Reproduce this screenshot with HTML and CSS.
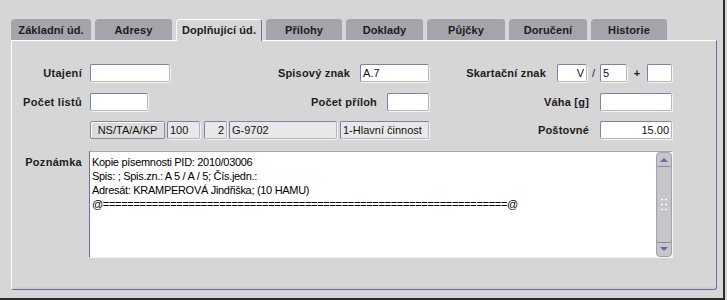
FILE: index.html
```html
<!DOCTYPE html>
<html lang="cs">
<head>
    <meta charset="UTF-8">
    <title>Doplňující údaje</title>
    <link rel="stylesheet" href="styles.css">
</head>
<body>
    <div class="window">

        <!-- Tabs -->
        <div class="tabs">
            <div class="tab w80">Základní úd.</div>
            <div class="tab w77">Adresy</div>
            <div class="tab active w86">Doplňující úd.</div>
            <div class="tab w76">Přílohy</div>
            <div class="tab w77">Doklady</div>
            <div class="tab w78">Půjčky</div>
            <div class="tab w78">Doručení</div>
            <div class="tab w76">Historie</div>
        </div>

        <!-- Tab panel -->
        <div class="panel">
            <div class="row">
                <label class="lbl">Utajení</label>
                <div class="mid">
                    <input class="field" style="width:80px" type="text">
                    <div class="group">
                        <label class="lbl-in">Spisový znak</label>
                        <input class="field" style="width:69px" type="text" value="A.7">
                    </div>
                </div>
                <div class="right">
                    <label class="lbl-in">Skartační znak</label>
                    <input class="field num" style="width:30px" type="text" value="V">
                    <span class="sep s13">/</span>
                    <input class="field" style="width:27px" type="text" value="5">
                    <span class="sep s20">+</span>
                    <input class="field" style="width:25px" type="text">
                </div>
            </div>

            <div class="row gap10">
                <label class="lbl">Počet listů</label>
                <div class="mid">
                    <input class="field" style="width:58px" type="text">
                    <div class="group">
                        <label class="lbl-in">Počet příloh</label>
                        <input class="field" style="width:42px" type="text">
                    </div>
                </div>
                <div class="right">
                    <label class="lbl-in">Váha [g]</label>
                    <input class="field" style="width:72px" type="text">
                </div>
            </div>

            <div class="row gap12">
                <span class="lbl"></span>
                <div class="mid start">
                    <button class="btn">NS/TA/A/KP</button>
                    <input class="field ro ml2" style="width:33px" type="text" value="100" readonly>
                    <input class="field ro num ml4" style="width:23px" type="text" value="2" readonly>
                    <input class="field ro ml2" style="width:108px" type="text" value="G-9702" readonly>
                    <input class="field ro ml3" style="width:89px" type="text" value="1-Hlavní činnost" readonly>
                </div>
                <div class="right">
                    <label class="lbl-in">Poštovné</label>
                    <input class="field num" style="width:72px" type="text" value="15.00">
                </div>
            </div>

            <div class="memo-row">
                <label class="lbl memo-lbl">Poznámka</label>
                <div class="memo">
                    <div class="memo-text">Kopie písemnosti PID: 2010/03006
Spis: ; Spis.zn.: A 5 / A / 5; Čís.jedn.:
Adresát: KRAMPEROVÁ Jindřiška; (10 HAMU)
@==================================================================@</div>
                    <div class="scrollbar">
                        <div class="arrow up"></div>
                        <div class="track">
                            <div class="grip"></div>
                        </div>
                        <div class="arrow down"></div>
                    </div>
                </div>
            </div>
        </div>

    </div>
</body>
</html>
```

FILE: styles.css
```css
/* Basic Styles */
html, body {
    margin: 0;
    padding: 0;
    height: 300px;
    overflow: hidden;
}

body {
    background-color: #d6d6d6;
    font-family: "Liberation Sans", Arial, sans-serif;
    font-size: 11px;
    color: #1c1c1c;
}

.window {
    box-sizing: border-box;
    width: 725px;
    height: 300px;
    padding: 19px 0 0 11px;
    border-right: 2px solid #2c2c2c;
    border-bottom: 2px solid #2c2c2c;
}

/* Tabs */
.tabs {
    display: flex;
    gap: 4px;
    height: 21px;
}

.tab {
    box-sizing: border-box;
    height: 21px;
    padding-top: 3px;
    line-height: 16px;
    text-align: center;
    font-weight: bold;
    letter-spacing: 0.1px;
    background-color: #a4a4aa;
    border-radius: 4px 3px 0 0;
}

.tab.active {
    position: relative;
    z-index: 1;
    height: 22px;
    background-color: #d6d6d6;
    border-top: 1px solid #ffffff;
    border-left: 1px solid #ffffff;
    border-right: 1px solid #6c6ca8;
    padding-top: 2px;
}

.w76 { width: 76px; }
.w77 { width: 77px; }
.w78 { width: 78px; }
.w80 { width: 80px; }
.w86 { width: 86px; }

/* Panel */
.panel {
    box-sizing: border-box;
    width: 706px;
    height: 250px;
    padding-top: 23px;
    border-top: 1px solid #ffffff;
    border-left: 1px solid #ffffff;
    border-right: 1px solid #6c6ca8;
    border-bottom: 1px solid #6c6ca8;
    border-bottom-right-radius: 3px;
    box-shadow: inset 0 -2px 0 #cfcfd2;
}

.row {
    display: flex;
    align-items: center;
    height: 18px;
    margin-bottom: 11px;
}

.row.gap10 { margin-bottom: 10px; }
.row.gap12 { margin-bottom: 12px; }

.lbl {
    width: 70px;
    flex: none;
    text-align: right;
    font-weight: bold;
    letter-spacing: 0.3px;
    margin-right: 8px;
}

.lbl-in {
    font-weight: bold;
    letter-spacing: 0.2px;
    margin-right: 11px;
}

.mid {
    width: 339px;
    display: flex;
    align-items: center;
    justify-content: space-between;
}

.mid.start {
    justify-content: flex-start;
}

.group {
    display: flex;
    align-items: center;
}

.group .lbl-in {
    margin-right: 10px;
}

.right {
    width: 243px;
    display: flex;
    align-items: center;
    justify-content: flex-end;
}

.sep {
    text-align: center;
    font-weight: bold;
}

.s13 { width: 13px; font-weight: normal; }
.s20 { width: 20px; }

/* Inputs */
.field {
    box-sizing: border-box;
    height: 18px;
    margin: 0;
    padding: 0 2px;
    font-family: "Liberation Sans", Arial, sans-serif;
    font-size: 11px;
    color: #111111;
    background-color: #ffffff;
    border: 1px solid #8080aa;
    border-right-color: #b4b4c4;
    border-bottom-color: #b4b4c4;
    border-radius: 2px;
    box-shadow: 1px 1px 0 #f4f4f4;
    outline: none;
}

.field.num {
    text-align: right;
}

.field.ro {
    background-color: #e8e8e8;
}

.ml2 { margin-left: 2px; }
.ml3 { margin-left: 3px; }
.ml4 { margin-left: 4px; }

.btn {
    box-sizing: border-box;
    width: 75px;
    height: 18px;
    padding: 0;
    font-family: "Liberation Sans", Arial, sans-serif;
    font-size: 11px;
    color: #111111;
    background-color: #dcdcdc;
    border: 1px solid #8a8aa2;
    border-radius: 2px;
    box-shadow: inset 1px 1px 0 #ffffff;
}

/* Memo */
.memo-row {
    display: flex;
    align-items: flex-start;
}

.memo-lbl {
    padding-top: 4px;
    line-height: 14px;
    margin-right: 7px;
}

.memo {
    box-sizing: border-box;
    width: 584px;
    height: 107px;
    display: flex;
    background-color: #ffffff;
    border-top: 1px solid #a8a8b0;
    border-left: 1px solid #7070a4;
    border-right: 1px solid #f4f4f4;
    border-bottom: 1px solid #f4f4f4;
}

.memo-text {
    flex: 1;
    padding: 3px 0 0 2px;
    white-space: pre;
    line-height: 14px;
    letter-spacing: -0.3px;
    color: #000000;
    overflow: hidden;
}

.scrollbar {
    box-sizing: border-box;
    width: 16px;
    display: flex;
    flex-direction: column;
    background-color: #c6c6ca;
    border: 1px solid #a2a2aa;
    border-radius: 4px;
}

.arrow {
    height: 13px;
    position: relative;
}

.arrow.up {
    border-bottom: 1px solid #8a8aa8;
}

.arrow.down {
    border-top: 1px solid #8a8aa8;
}

.arrow::after {
    content: "";
    position: absolute;
    left: 3px;
    top: 5px;
    border-left: 4px solid transparent;
    border-right: 4px solid transparent;
}

.arrow.up::after {
    border-bottom: 4px solid #6a6a9a;
}

.arrow.down::after {
    border-top: 4px solid #6a6a9a;
    top: 4px;
}

.track {
    flex: 1;
    display: flex;
    align-items: center;
    justify-content: center;
}

.grip {
    width: 8px;
    height: 16px;
    background-image: radial-gradient(circle, #ffffff 0.8px, transparent 1.2px);
    background-size: 4px 5px;
}
```
